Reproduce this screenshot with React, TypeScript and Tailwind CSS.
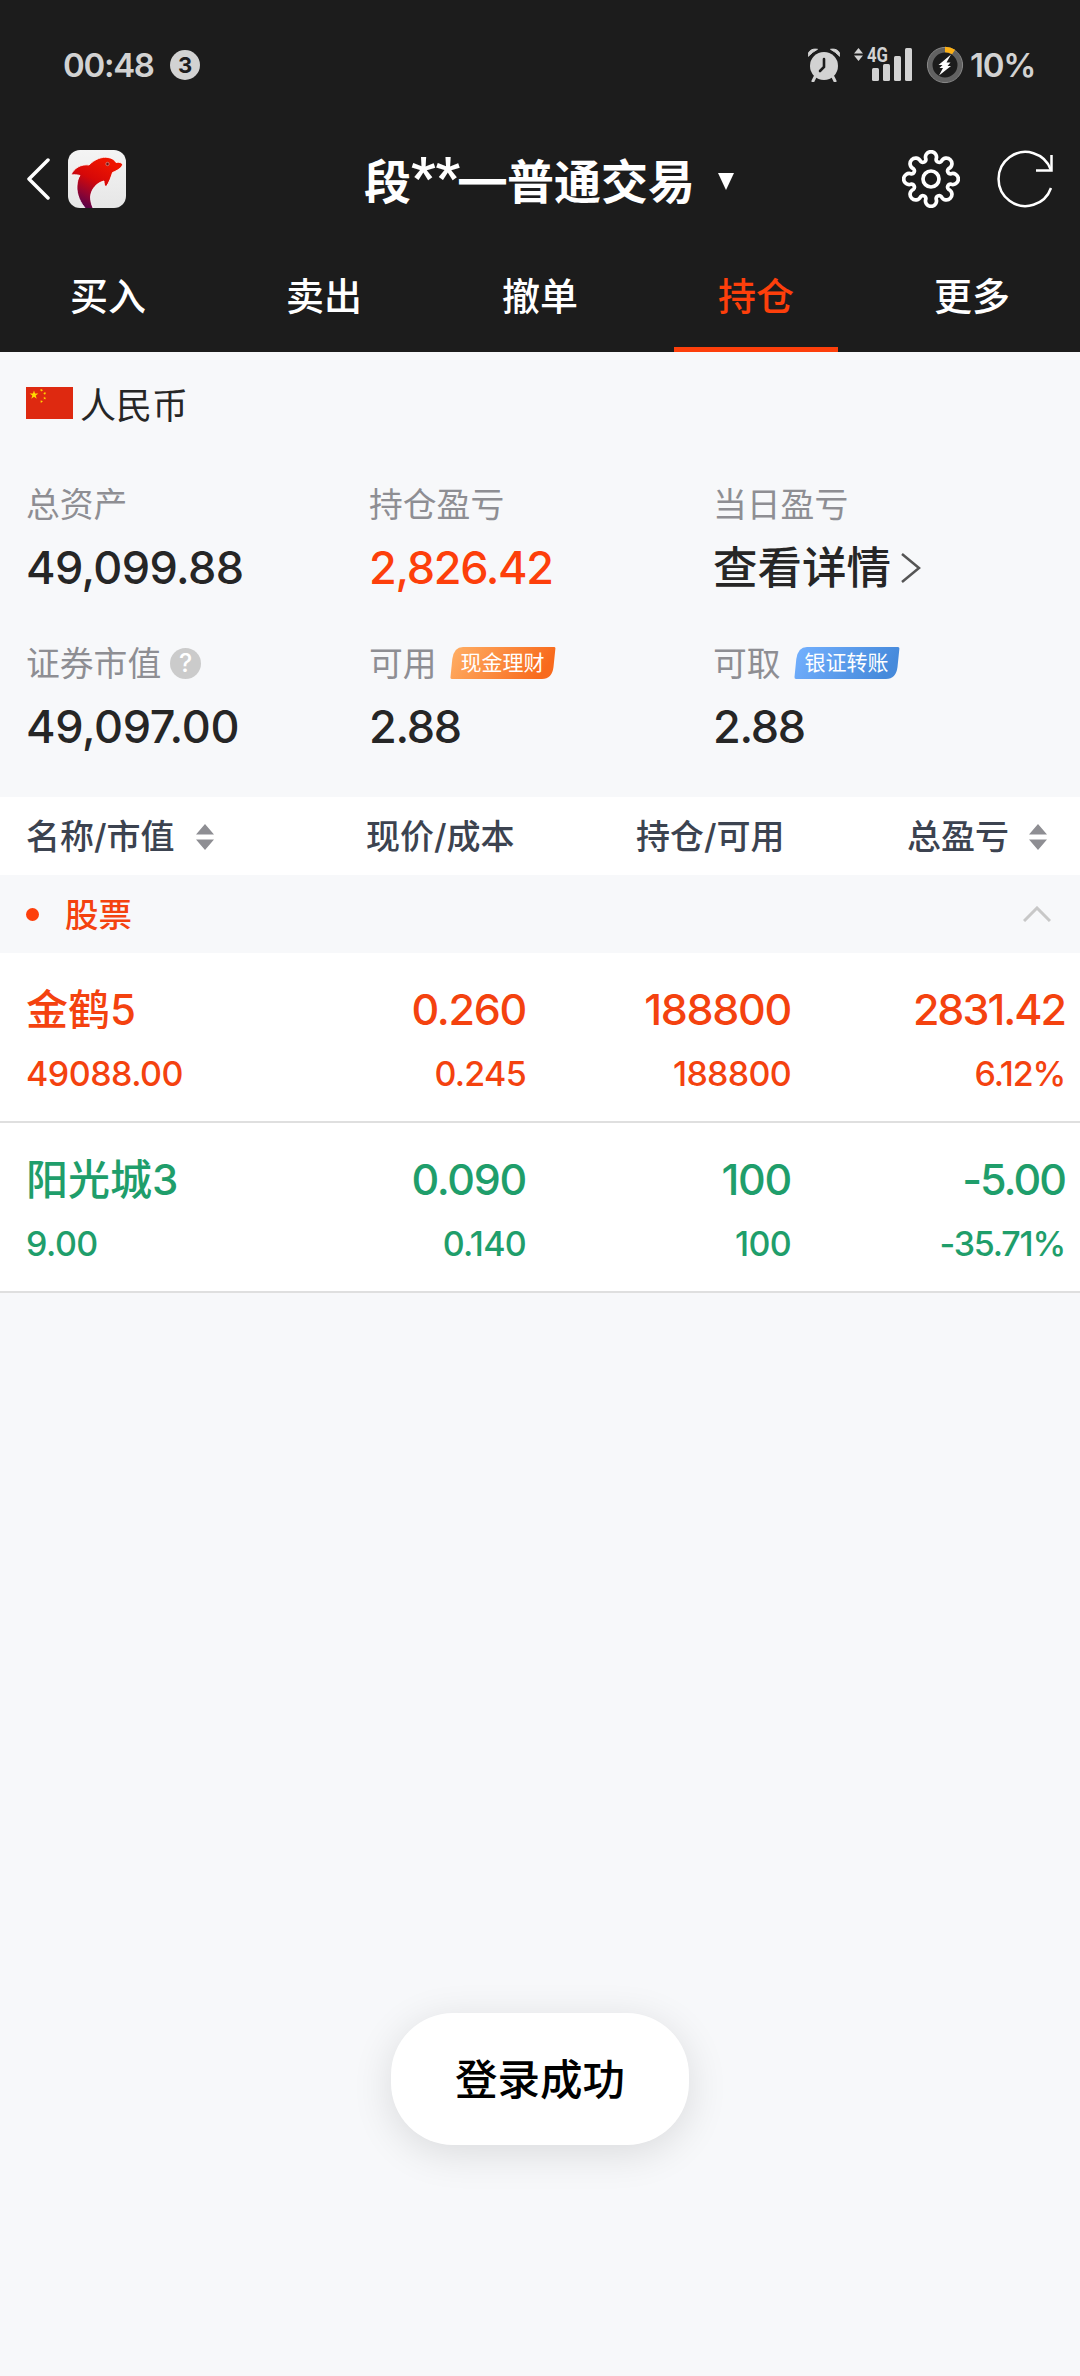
import React from 'react';
import clsx from 'clsx';

const TABS = ['买入', '卖出', '撤单', '持仓', '更多'];

interface Holding {
  name: string;
  marketValue: string;
  price: string;
  cost: string;
  amount: string;
  available: string;
  profit: string;
  rate: string;
  up: boolean;
}

const HOLDINGS: Holding[] = [
  {
    name: '金鹤5',
    marketValue: '49088.00',
    price: '0.260',
    cost: '0.245',
    amount: '188800',
    available: '188800',
    profit: '2831.42',
    rate: '6.12%',
    up: true,
  },
  {
    name: '阳光城3',
    marketValue: '9.00',
    price: '0.090',
    cost: '0.140',
    amount: '100',
    available: '100',
    profit: '-5.00',
    rate: '-35.71%',
    up: false,
  },
];

// eight round lobes joined by small notches
const gearPath = () => {
  const pt = (deg: number) => {
    const a = (deg * Math.PI) / 180;
    return `${(29 + 20.5 * Math.cos(a)).toFixed(2)} ${(29 + 20.5 * Math.sin(a)).toFixed(2)}`;
  };
  let d = `M${pt(-14.5)}`;
  for (let k = 0; k < 8; k++) {
    d += `A5.5 5.5 0 1 1 ${pt(k * 45 + 14.5)}A3 3 0 0 0 ${pt(k * 45 + 30.5)}`;
  }
  return d + 'Z';
};

const AlarmIcon = () => (
  <svg width="32" height="34" viewBox="0 0 32 34" fill="#d2d2d2">
    <circle cx="16" cy="18" r="14" />
    <path d="M.3 8.300C-.6 3 4 .3 9.500 1.300Q4.500 3.800 .3 8.300ZM31.700 8.300C32.600 3 28 .3 22.500 1.300Q27.500 3.800 31.700 8.300Z" stroke="#d2d2d2" />
    <path d="M7 29l-2 4M25 29l2 4" stroke="#d2d2d2" strokeWidth="3" strokeLinecap="round" />
    <path d="M16 11v8l-4 4" stroke="#1c1c1c" strokeWidth="2.6" fill="none" strokeLinecap="round" />
  </svg>
);

const SignalIcon = () => (
  <svg width="59" height="34" viewBox="0 0 59 34" fill="#d2d2d2" className="overflow-visible">
    <path d="M0 5.500L4.500 0 9 5.500zM0 7.500h9L4.500 13z" />
    <text x="13" y="14" fontSize="19.500" fontWeight="700" textLength="21" lengthAdjust="spacingAndGlyphs" className="font-['Roboto',sans-serif]">
      4G
    </text>
    <rect x="18" y="20" width="7" height="13" rx="1.5" />
    <rect x="29" y="16" width="7" height="17" rx="1.5" />
    <rect x="40" y="8" width="7" height="25" rx="1.5" />
    <rect x="51" y="0" width="7" height="33" rx="1.5" />
  </svg>
);

const BatteryRing = () => (
  <svg width="38" height="38" viewBox="0 0 38 38" fill="none">
    <circle cx="19" cy="19" r="15" stroke="#626262" strokeWidth="5" />
    <circle cx="19" cy="19" r="17.6" stroke="#8a8a8a" strokeWidth="1" />
    <path d="M19 3.4a15.6 15.6 0 0 1 8.6 2.6" stroke="#fcb015" strokeWidth="5.5" />
    <path d="M25 8.5L12.5 19h4l-3 3h3.5l-4 7.5L25 20h-3.5l3-3.500h-4z" fill="#fff" />
  </svg>
);

const DolphinLogo = () => (
  <svg width="58" height="58" viewBox="0 0 58 58">
    <defs>
      <linearGradient id="body" x1="0.7" y1="0.1" x2="0.25" y2="1">
        <stop offset="0" stopColor="#ee1500" />
        <stop offset="0.4" stopColor="#d60808" />
        <stop offset="0.7" stopColor="#94052f" />
        <stop offset="1" stopColor="#4c0350" />
      </linearGradient>
      <linearGradient id="tile" x1="0" y1="0" x2="0" y2="1">
        <stop offset="0" stopColor="#f4f4f4" />
        <stop offset="1" stopColor="#e6e6e6" />
      </linearGradient>
      <clipPath id="tileClip">
        <rect width="58" height="58" rx="12" />
      </clipPath>
    </defs>
    <g clipPath="url(#tileClip)">
      <rect width="58" height="58" fill="url(#tile)" />
      <path
        d="M3 25C6 18 13 14 21 15C27 9 34 6.500 40 7.500C44 8 46.500 10 48 12.500C51 12 54 12.500 54.500 14.500C54 18 49 20.500 44.500 22.500C43 27 41.500 32 38 37C36.500 35.500 36 33.500 36 31C29 32.500 23 39 22.500 47C22.500 52 24 56 26 60H19C12 53 8.500 44 9 36C9.300 31.500 10 28.500 12 25.500C9 24.500 6 24.500 3 25Z"
        fill="url(#body)"
        stroke="#fff"
        strokeWidth="0.8"
      />
      <circle cx="39.500" cy="14" r="1.7" fill="#6f1414" stroke="#e6a7a0" strokeWidth="0.6" />
    </g>
  </svg>
);

const SortIcon = () => (
  <svg width="18" height="26" viewBox="0 0 18 26" fill="#8e8e93">
    <path d="M0 10.500L9 0l9 10.500zM0 15.500h18L9 26z" />
  </svg>
);

const ChinaFlag = () => {
  const star = 'M0-1L.2245-.309.951-.309.363.118.588.809 0 .382-.588.809-.363.118-.951-.309-.2245-.309Z';
  return (
    <svg className="mb-[5px]" width="47" height="32" viewBox="0 0 47 32">
      <rect width="47" height="32" fill="#de2910" />
      <g fill="#ffde00">
        <path d={star} transform="translate(8 8) scale(4.600)" />
        <path d={star} transform="translate(15.500 3.200) rotate(23) scale(1.700)" />
        <path d={star} transform="translate(18.700 6.400) rotate(45) scale(1.700)" />
        <path d={star} transform="translate(18.700 11.200) scale(1.700)" />
        <path d={star} transform="translate(15.500 14.500) rotate(20) scale(1.700)" />
      </g>
    </svg>
  );
};

const Badge = ({ id, text, from, to }: { id: string; text: string; from: string; to: string }) => (
  <span className="relative mb-[3px] ml-[13px] flex h-8 w-[106px] items-center justify-center">
    <svg className="absolute inset-0" width="106" height="32" viewBox="0 0 106 32">
      <defs>
        <linearGradient id={id} x1="0" y1="0" x2="1" y2="0.2">
          <stop offset="0" stopColor={from} />
          <stop offset="1" stopColor={to} />
        </linearGradient>
      </defs>
      <path d="M13 0H104Q105.500 0 105.400 1.500L103.500 20Q102 32 92 32H2Q.3 32 .5 30L2.300 12Q4 0 13 0Z" fill={`url(#${id})`} />
    </svg>
    <span className="relative text-[21px] leading-8 tracking-normal text-white">{text}</span>
  </span>
);

const Header = () => (
  <header className="h-[352px] bg-[#1c1c1c] text-white">
    <div className="flex h-[130px] items-center pl-[63px] pr-[45px] text-[#d2d2d2]">
      <span className="w-[107px] whitespace-nowrap text-[33px] font-semibold leading-none tracking-[-1.300px]">00:48</span>
      <span className="flex size-[30px] items-center justify-center rounded-full bg-[#d2d2d2] text-[22px] font-bold leading-none text-[#1c1c1c]">
        3
      </span>
      <span className="flex-1" />
      <AlarmIcon />
      <span className="ml-[14px]">
        <SignalIcon />
      </span>
      <span className="ml-[13px]">
        <BatteryRing />
      </span>
      <span className="ml-[6px] text-[33px] font-semibold leading-none tracking-[-1.300px]">10%</span>
    </div>

    <div className="grid h-[98px] grid-cols-[340px_400px_340px] items-center">
      <div className="flex items-center pl-[26px]">
        <svg width="24" height="42" viewBox="0 0 24 42" fill="none" stroke="#fff" strokeWidth="3.5" strokeLinecap="round" strokeLinejoin="round">
          <path d="M22 2L3 21l19 19" />
        </svg>
        <span className="ml-[18px]">
          <DolphinLogo />
        </span>
      </div>
      <div className="flex items-center whitespace-nowrap pl-[24px]">
        <h1 className="flex h-[60px] w-[354px] font-['Noto_Sans_CJK_SC',sans-serif] text-[47px] font-bold leading-[60px]">
          <span>段</span>
          <span className="-mt-[2px] w-[48px] font-['Roboto',sans-serif] text-[54px]">**</span>
          <span className="w-[48px] font-['Inter',sans-serif] text-[47px]">—</span>
          <span>普通交易</span>
        </h1>
        <svg width="16" height="17" viewBox="0 0 16 17" fill="#fff" className="mt-1">
          <path d="M0 0h16L8 17z" />
        </svg>
      </div>
      <div className="flex items-center justify-end gap-[37px] pr-[26px]">
        <svg width="58" height="58" viewBox="0 0 58 58" fill="none" stroke="#fff" strokeWidth="3.700">
          <path d={gearPath()} />
          <circle cx="29" cy="29" r="8" />
        </svg>
        <svg width="57" height="58" viewBox="0 0 57 58" fill="none" stroke="#fff" strokeWidth="2.500">
          <path d="M54 20A27 27 0 1 0 54 38" />
          <path d="M54.500 5v15.500H39" />
        </svg>
      </div>
    </div>

    <nav className="grid h-[124px] grid-cols-5">
      {TABS.map((tab) => (
        <button
          key={tab}
          className={clsx(
            'mx-auto flex h-[124px] w-[164px] items-center justify-center border-b-[5px] pb-[2px] pt-[20px] text-[38px] font-medium',
            tab === '持仓' ? 'border-[#fd3f0b] text-[#fd3f0b]' : 'border-transparent'
          )}
        >
          {tab}
        </button>
      ))}
    </nav>
  </header>
);

interface AssetProps {
  label: React.ReactNode;
  children: React.ReactNode;
  className?: string;
}

const Asset = ({ label, children, className }: AssetProps) => (
  <div className="h-[159px]">
    <div className="flex h-12 items-center text-[33.800px] text-[#8e8e93]">{label}</div>
    <div className={clsx('mt-[11px] flex h-14 items-center text-[45px] font-medium', className)}>{children}</div>
  </div>
);

const Summary = () => (
  <section className="h-[445px] pl-[26px]">
    <div className="flex h-[106px] items-center text-[36px] text-[#262626]">
      <ChinaFlag />
      <span className="ml-[7px] pt-[2px]">人民币</span>
    </div>
    <div className="mt-[23px] grid grid-cols-[343px_344px_1fr] text-[#262626]">
      <Asset label="总资产" className="tracking-[-0.600px]">
        49,099.88
      </Asset>
      <Asset label="持仓盈亏" className="tracking-[-1.300px] text-[#fd3f0b]">
        2,826.42
      </Asset>
      <Asset label="当日盈亏">
        <span className="text-[44.500px]">查看详情</span>
        <svg className="ml-[10px]" width="20" height="30" viewBox="0 0 20 30" fill="none" stroke="#555" strokeWidth="2.500">
          <path d="M1 1l17 14L1 29" />
        </svg>
      </Asset>
      <Asset
        className="tracking-[-0.350px]"
        label={
          <>
            证券市值
            <span className="mb-[2px] ml-[9px] flex size-[31px] items-center justify-center rounded-full bg-[#cbcbcb] text-[25px] font-medium leading-none text-white">
              ?
            </span>
          </>
        }
      >
        49,097.00
      </Asset>
      <Asset
        className="tracking-[-1.300px]"
        label={
          <>
            可用
            <Badge id="cash" text="现金理财" from="#ffb066" to="#f86a1c" />
          </>
        }
      >
        2.88
      </Asset>
      <Asset
        className="tracking-[-1.300px]"
        label={
          <>
            可取
            <Badge id="bank" text="银证转账" from="#74b1ff" to="#468adb" />
          </>
        }
      >
        2.88
      </Asset>
    </div>
  </section>
);

const Cell = ({ main, sub, tight }: { main: string; sub: string; tight?: boolean }) => (
  <div className="text-right">
    <div className={clsx('h-[62px] text-[43px] font-medium leading-[60px]', tight ? 'tracking-[-2px]' : 'tracking-[-1.300px]')}>{main}</div>
    <div className={clsx('h-[64px] text-[34px] font-medium leading-[65px]', tight ? 'tracking-[-1.200px]' : 'tracking-[-0.700px]')}>{sub}</div>
  </div>
);

const HoldingRow = ({ item }: { item: Holding }) => (
  <div
    className={clsx(
      'grid h-[170px] grid-cols-[300px_200px_265px_274px] border-b-2 border-[#dfdfdf] bg-white pl-[26px] pt-[26px]',
      item.up ? 'text-[#f4420f]' : 'text-[#1f9e6b]'
    )}
  >
    <div>
      <div className="h-[62px] text-[42px] font-medium leading-[62px]">{item.name}</div>
      <div className="h-[64px] text-[34px] font-medium leading-[65px] tracking-[-0.500px]">{item.marketValue}</div>
    </div>
    <Cell main={item.price} sub={item.cost} />
    <Cell main={item.amount} sub={item.available} />
    <Cell main={item.profit} sub={item.rate} tight />
  </div>
);

const App = () => {
  return (
    <div className="relative h-[2376px] w-[1080px] overflow-hidden bg-[#f7f8fa] font-['Inter','Noto_Sans_CJK_SC',sans-serif]">
      <Header />
      <Summary />

      <section>
        <div className="flex h-[78px] items-center bg-white pl-[26px] pr-[33px] pt-px text-[34px] font-medium text-[#3c4350]">
          <span className="w-[340px]">
            <span className="flex items-center gap-[21px]">
              名称/市值
              <SortIcon />
            </span>
          </span>
          <span className="w-[270px]">现价/成本</span>
          <span className="w-[271px]">持仓/可用</span>
          <span>总盈亏</span>
          <span className="ml-auto">
            <SortIcon />
          </span>
        </div>
        <div className="flex h-[78px] items-center pl-[26px] pr-[29px] text-[33.500px] font-medium text-[#f4420f]">
          <i className="size-[13px] rounded-full bg-[#fd3f0b]" />
          <span className="ml-[26px] pt-[2px]">股票</span>
          <svg className="ml-auto" width="28" height="16" viewBox="0 0 28 16" fill="none" stroke="#c8c8c8" strokeWidth="3">
            <path d="M1 15L14 2l13 13" />
          </svg>
        </div>
        {HOLDINGS.map((item) => (
          <HoldingRow key={item.name} item={item} />
        ))}
      </section>

      {/* toast */}
      <div className="absolute left-[391px] top-[2013px] flex h-[132px] w-[298px] items-center justify-center rounded-[62px] bg-white pt-[2px] text-[42.500px] font-medium text-black shadow-[0_8px_40px_rgba(0,0,0,0.12)]">
        登录成功
      </div>
    </div>
  );
};

export default App;
